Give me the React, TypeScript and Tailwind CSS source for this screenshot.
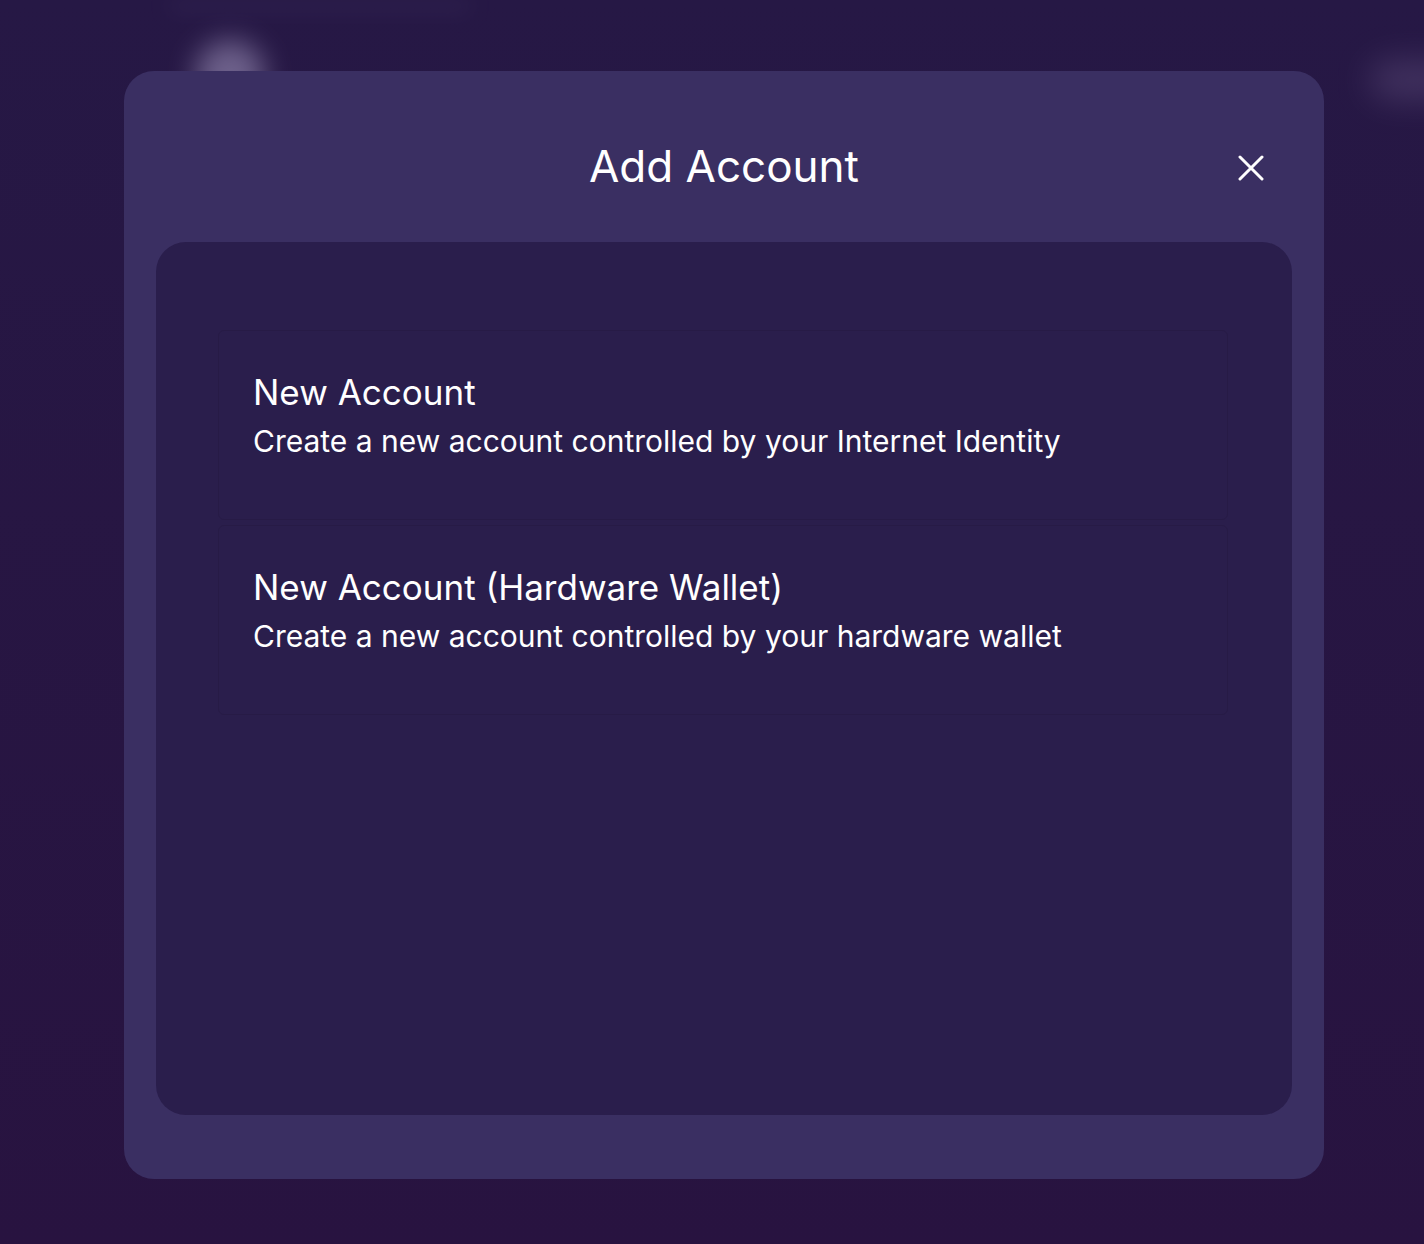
import React from "react";

type Option = {
  id: string;
  title: string;
  description: string;
};

const OPTIONS: ReadonlyArray<Option> = [
  {
    id: "ii",
    title: "New Account",
    description: "Create a new account controlled by your Internet Identity",
  },
  {
    id: "hw",
    title: "New Account (Hardware Wallet)",
    description: "Create a new account controlled by your hardware wallet",
  },
];

function CloseIcon(): React.ReactElement {
  return (
    <svg width="26" height="26" viewBox="0 0 26 26" fill="none" aria-hidden="true">
      <path d="M2 2L24 24M24 2L2 24" stroke="white" strokeWidth="3" strokeLinecap="round" />
    </svg>
  );
}

export default function App(): React.ReactElement {
  return (
    <div
      className="relative h-[1244px] w-full overflow-hidden bg-gradient-to-b from-[#261845] to-[#281340] text-white"
      style={{ fontFamily: "Inter, 'Open Sans', sans-serif" }}
    >
      {/* blurred app content behind the modal */}
      <div className="absolute left-[195px] top-[40px] h-[70px] w-[70px] rounded-full bg-[#8b7fa8] opacity-70 blur-[14px]" />
      <div className="absolute left-[1370px] top-[60px] h-[40px] w-[90px] rounded-full bg-[#5b4a78] opacity-50 blur-[16px]" />
      <div className="absolute left-[170px] top-0 h-[12px] w-[300px] bg-[#3a2c5c] opacity-40 blur-[10px]" />

      <div className="relative pl-[124px] pt-[71px]">
        <div className="flex h-[1108px] w-[1200px] flex-col rounded-[30px] bg-[#3a2f62] px-[32px] pb-[64px]">
          <header className="relative flex h-[171px] items-center justify-center">
            <h1 className="pt-[18px] text-[44px] font-normal leading-none">Add Account</h1>
            <button
              type="button"
              aria-label="Close"
              className="absolute right-[27px] top-[83px] grid h-[28px] w-[28px] place-items-center"
            >
              <CloseIcon />
            </button>
          </header>

          <div className="flex flex-1 flex-col gap-[5px] rounded-[30px] bg-[#2a1e4c] pl-[62px] pr-[64px] pt-[88px]">
            {OPTIONS.map((opt) => (
              <button
                key={opt.id}
                type="button"
                className="flex h-[190px] flex-col items-start justify-center rounded-[6px] border border-[#271b46] px-[34px] pb-[14px] text-left"
              >
                <span className="text-[35px] leading-[46px]">{opt.title}</span>
                <span className="text-[30px] leading-[52px]">{opt.description}</span>
              </button>
            ))}
          </div>
        </div>
      </div>
    </div>
  );
}
